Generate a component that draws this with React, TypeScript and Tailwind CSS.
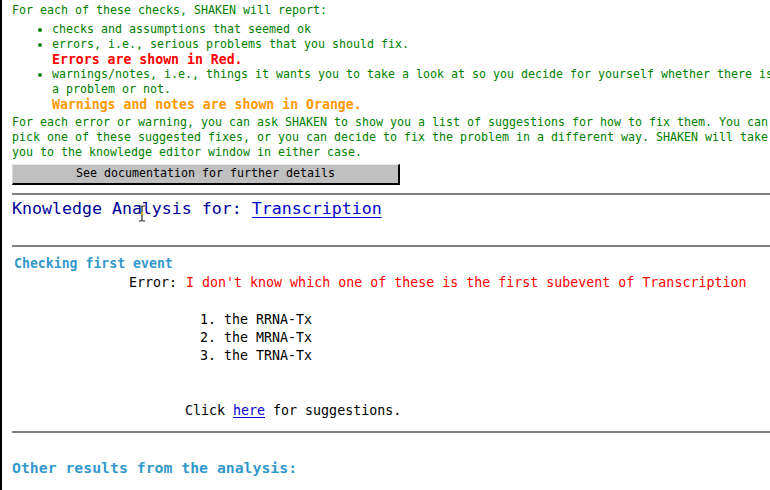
import React from "react";

const mono = { fontFamily: '"DejaVu Sans Mono", "Liberation Mono", monospace' };

function Bullet({ children }: { children: React.ReactNode }) {
  return (
    <div className="relative pl-[40px]">
      <span className="absolute left-[26px] top-[6px] h-[4px] w-[4px] rounded-full bg-[#008000]" />
      {children}
    </div>
  );
}

export default function App() {
  return (
    <div
      className="relative h-[490px] w-[770px] overflow-hidden border-l-2 border-black bg-white"
      style={mono}
    >
      <div className="w-[900px] pl-[10px] pt-[3px]">
        <div className="whitespace-nowrap text-[11.63px] leading-[15px] text-[#008000]">
          <div>For each of these checks, SHAKEN will report:</div>
          <div className="mt-[4px]">
            <Bullet>checks and assumptions that seemed ok</Bullet>
            <Bullet>errors, i.e., serious problems that you should fix.</Bullet>
            <div className="pl-[40px] text-[13.2px] font-bold text-[#ff0000]">Errors are shown in Red.</div>
            <Bullet>
              warnings/notes, i.e., things it wants you to take a look at so you decide for yourself whether there is
            </Bullet>
            <div className="pl-[40px]">a problem or not.</div>
            <div className="pl-[40px] text-[13.2px] font-bold text-[#ff9900]">Warnings and notes are shown in Orange.</div>
          </div>
          <div className="mt-[3px]">
            <div>For each error or warning, you can ask SHAKEN to show you a list of suggestions for how to fix them. You can</div>
            <div>pick one of these suggested fixes, or you can decide to fix the problem in a different way. SHAKEN will take</div>
            <div>you to the knowledge editor window in either case.</div>
          </div>
        </div>

        <div className="mt-[4px] flex h-[21px] w-[388px] items-center justify-center border border-t-[#e6e6e6] border-l-[#d8d8d8] border-b-2 border-r-2 border-b-black border-r-black bg-[#c0c0c0] text-[11.63px] text-black">
          See documentation for further details
        </div>

        <div className="mt-[8px] border-t-2 border-[#808080]" />

        <div className="relative mt-[4px] whitespace-nowrap text-[16.6px] leading-[20px] text-[#000099]">
          Knowledge Analysis for:{" "}
          <span className="text-[#0000cc] underline underline-offset-[3px]">Transcription</span>
          <svg className="absolute left-[126px] top-[6px]" width="8" height="17" viewBox="0 0 8 17">
            <path d="M1 1h2.5M4.5 1H7M4 1v15M1 16h2.5M4.5 16H7" stroke="#222" strokeWidth="1.2" fill="none" />
            <path d="M4 7v3" stroke="#e0d000" strokeWidth="1.2" />
          </svg>
        </div>

        <div className="mt-[26px] border-t-2 border-[#808080]" />

        <div className="mt-[9px] pl-[2px] text-[13.2px] font-bold leading-[15px] text-[#3399cc]">
          Checking first event
        </div>

        <div className="mt-[4px] flex whitespace-nowrap text-[13.3px] leading-[16px]">
          <span className="pl-[117px] text-black">Error:</span>
          <span className="pl-[9px] text-[#ff0000]">
            I don't know which one of these is the first subevent of Transcription
          </span>
        </div>

        <div className="mt-[20px] whitespace-pre pl-[188px] text-[13.3px] leading-[18px] text-black">
          <div>1. the RRNA-Tx</div>
          <div>2. the MRNA-Tx</div>
          <div>3. the TRNA-Tx</div>
        </div>

        <div className="mt-[37px] pl-[173px] text-[13.3px] leading-[18px] text-black">
          Click <span className="text-[#0000cc] underline underline-offset-[2px]">here</span> for suggestions.
        </div>

        <div className="mt-[11px] border-t-2 border-[#808080]" />

        <div className="mt-[25px] text-[14.8px] font-bold leading-[20px] text-[#3399cc]">
          Other results from the analysis:
        </div>
      </div>
    </div>
  );
}
